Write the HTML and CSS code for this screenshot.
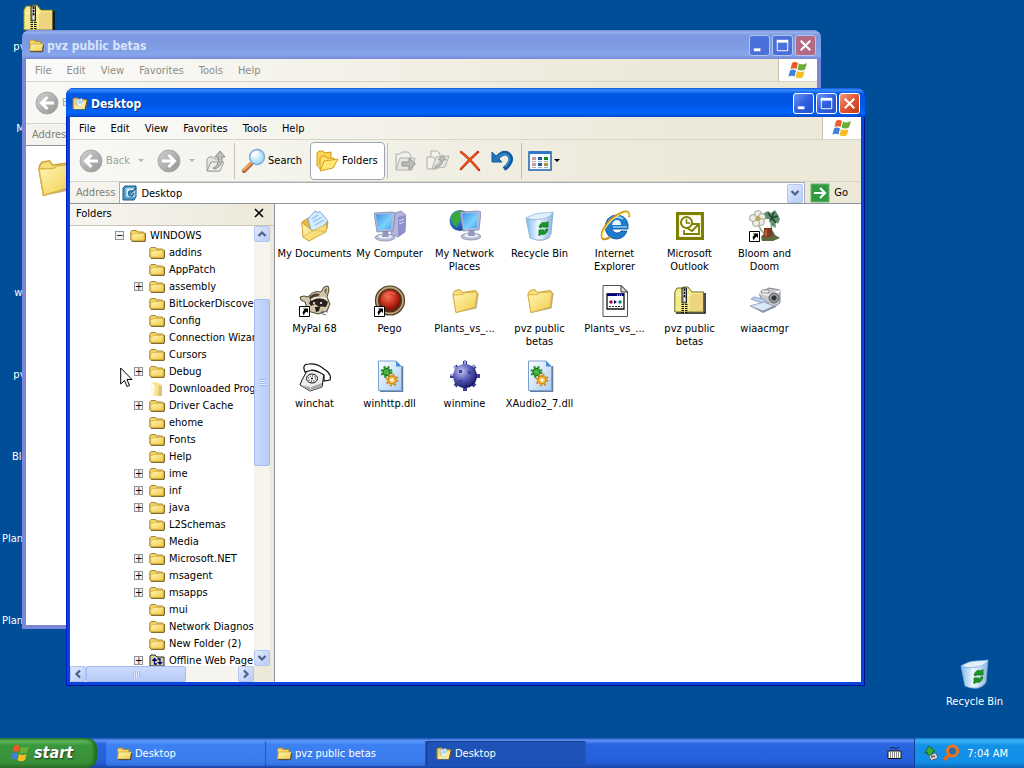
FILE: index.html
```html
<!DOCTYPE html>
<html lang="en">
<head>
<meta charset="utf-8">
<title>Desktop</title>
<link rel="stylesheet" href="styles.css">
</head>
<body>
<svg class="sprites" aria-hidden="true">
  <defs>
    <linearGradient id="gFold" x1="0" y1="0" x2="1" y2="1"><stop offset="0" stop-color="#fff6b8"/><stop offset="1" stop-color="#f3cc48"/></linearGradient>
    <linearGradient id="gGrey" x1="0" y1="0" x2="1" y2="1"><stop offset="0" stop-color="#d2d2d0"/><stop offset="1" stop-color="#929290"/></linearGradient>
    <linearGradient id="gBin" x1="0" y1="0" x2="1" y2="0"><stop offset="0" stop-color="#7fb8ee"/><stop offset=".45" stop-color="#edf7ff"/><stop offset="1" stop-color="#8db4e0"/></linearGradient>
    <linearGradient id="gScreen" x1="0" y1="0" x2="1" y2="1"><stop offset="0" stop-color="#3f8fe8"/><stop offset=".6" stop-color="#7cd2fb"/><stop offset="1" stop-color="#3fa2ee"/></linearGradient>
    <linearGradient id="gPage" x1="0" y1="0" x2="1" y2="1"><stop offset="0" stop-color="#fff"/><stop offset="1" stop-color="#a9cdf5"/></linearGradient>
    <radialGradient id="gMine" cx=".35" cy=".3" r=".7"><stop offset="0" stop-color="#c4c6f2"/><stop offset=".5" stop-color="#5f62bc"/><stop offset="1" stop-color="#1c1d6c"/></radialGradient>
    <radialGradient id="gRed" cx=".4" cy=".35" r=".7"><stop offset="0" stop-color="#f2705a"/><stop offset=".6" stop-color="#c42a17"/><stop offset="1" stop-color="#6e0d06"/></radialGradient>
    <radialGradient id="gGlobe" cx=".35" cy=".3" r=".8"><stop offset="0" stop-color="#5aa9f2"/><stop offset="1" stop-color="#083a8c"/></radialGradient>
    <radialGradient id="gLens" cx=".4" cy=".35" r=".7"><stop offset="0" stop-color="#fff"/><stop offset="1" stop-color="#8ed2f8"/></radialGradient>
  </defs>
  <symbol id="folder" viewBox="0 0 32 32">
    <path d="M8 27 L27 23 29 8" fill="none" stroke="#8d7d45" stroke-width="1.500" opacity=".6"/>
    <path d="M4 10 L4.500 7.500 6 5.500 11 4.500 13 7.500 26 5.500 28 7 26 22 7 27.500Z" fill="#f8dd78" stroke="#c9a23a"/>
    <path d="M4 10 L14 9.500 L16 7.800 L28 7 26 22 7 27.500Z" fill="url(#gFold)" stroke="#dcb548"/>
  </symbol>
  <symbol id="folder16" viewBox="0 0 16 16">
    <path d="M2 13.500 L14.500 13.500 15.500 12 15.500 5" fill="none" stroke="#5f552c" stroke-width="1.200"/>
    <path d="M.8 12 V4 L2 2.500 H6.500 L8 4 H13.500 L15 5.500 V12 L14 13 H2Z" fill="#f2d264" stroke="#a6862c"/>
    <path d="M1.500 6.500 H3.500 L4.500 5.500 H14.300 V12.300 H2Z" fill="url(#gFold)" stroke="#d4ab3c" stroke-width=".7"/>
  </symbol>
  <symbol id="pale16" viewBox="0 0 16 16">
    <path d="M2 2 L7 1 L12 3 L13 15 L2 15Z" fill="#f7e490"/><path d="M2 2 L6 4 L5 15 L2 15Z" fill="#fffbd9"/><path d="M10 4 L13 5 L13 15 L9 15Z" fill="#d8c278"/>
  </symbol>
  <symbol id="open16" viewBox="0 0 16 16">
    <path d="M1.500 13 V3 L2.500 2 H6 L7.500 3.500 H13 V6" fill="#f3d569" stroke="#b18d2e"/>
    <path d="M1.500 13 L3 6 H15.500 L14 13Z" fill="url(#gFold)" stroke="#c9a23a" stroke-width=".7"/><path d="M2 13.700 H14.500 L15.700 7" fill="none" stroke="#4b4224"/>
  </symbol>
  <symbol id="desk16" viewBox="0 0 16 16">
    <path d="M1 13 V3 L2 2 H6 L7 3.500 H12 L15 4 L13.500 13Z" fill="#f3d36e" stroke="#a17a24"/>
    <path d="M4 4 L10 2.500 L12 10 L6 11Z" fill="#e9f6ff" stroke="#88b4d8" stroke-width=".7"/><path d="M2 13 L3 9 L8 11 L11 6 L15 5 L13 13Z" fill="#fbe8a0"/><circle cx="8" cy="6" r="2" fill="#a8d5f4"/>
    <path d="M13 13.500 L15 5" stroke="#5e4415"/>
  </symbol>
  <symbol id="web16" viewBox="0 0 16 16">
    <path d="M1 13 V3 L2 2 H6 L8 4 H15 V13Z" fill="#d7dba0" stroke="#222"/><path d="M2.500 8 L5.500 4.500 L8.500 8Z M8 9 H14 L11 12Z" fill="#000080"/><path d="M5.500 7 V11 H8 M11 10 V6 H8.500" fill="none" stroke="#000080" stroke-width="1.300"/>
  </symbol>
  <symbol id="zip" viewBox="0 0 32 32">
    <path d="M2 28 H31 V8" fill="none" stroke="#111" stroke-width="1.500"/>
    <path d="M.8 27 V7 L3 3 H8 L10 2 H14 L18 7 H29.500 V27Z" fill="#f4ec86" stroke="#6f6a2c"/>
    <path d="M16 9 H29 V26 H16Z" fill="#eed480"/><path d="M2 10 H17" stroke="#fffde0"/>
    <path d="M8 3 H12.500 V18 H8Z" fill="#bbb" stroke="#222"/><path d="M10.500 4 V17" stroke="#111" stroke-width="1.500" stroke-dasharray="2 1"/>
    <path d="M10.500 19 V28" stroke="#111" stroke-width="6" stroke-dasharray="1 1"/><path d="M10.500 18 V28" stroke="#f4ec86" stroke-width="1"/><path d="M9 12 H12 V17 H9Z" fill="#eee" stroke="#333" stroke-width=".6"/>
  </symbol>
  <symbol id="docs" viewBox="0 0 32 32">
    <path d="M3 12 L9 8 L27 13 L29 12 L28 19 L10 31 L4 27Z" fill="#e6b73c" stroke="#b48420" stroke-width=".7"/>
    <path d="M9 9 L16 1 L19 2.500 L21 1.500 L29 11 L20 21 L12 20Z" fill="#d5ecfd" stroke="#78abdc"/><path d="M13 9 L19 5 M14 12 L23 7 M16 15 L25 10" stroke="#8ec0ea" stroke-width="1.300"/>
    <path d="M3 13 L14 21 L28 14 L27 22 L10 31 L4 27Z" fill="url(#gFold)" stroke="#c89b2c" stroke-width=".7"/><path d="M4 27 L15 20 L27 22" fill="none" stroke="#e2ba4a" stroke-width=".8"/>
  </symbol>
  <symbol id="monitor" viewBox="0 0 32 32">
    <ellipse cx="11" cy="27.500" rx="10" ry="3.500" fill="#b9bed6" stroke="#7e86a8" stroke-width=".7"/><ellipse cx="11" cy="26.500" rx="7" ry="2" fill="#edf0f8"/>
    <path d="M9 20 H14 L15 27 H8Z" fill="#929abf"/>
    <path d="M0 3 L18 2 L21 3 L19 21 L3 22Z" fill="#b4bada" stroke="#747da6" stroke-width=".7"/><path d="M2 4.500 L18 3.500 L17 19 L4 20Z" fill="url(#gScreen)"/>
  </symbol>
  <symbol id="computer" viewBox="0 0 32 32">
    <path d="M18 4 L27 1 L32 5 L31 22 L24 27 L17 24Z" fill="#b4b4e0" stroke="#7e7eb4" stroke-width=".7"/><path d="M24 7 L32 5 L31 22 L24 27Z" fill="#8f90cb"/><path d="M25 11 L30 9 M25 14 L30 12" stroke="#dddff8"/>
    <use href="#monitor" width="32" height="32"/>
  </symbol>
  <symbol id="network" viewBox="0 0 32 32">
    <circle cx="11" cy="10.500" r="10.500" fill="url(#gGlobe)"/><path d="M2 6 Q7 0 14 1 L15 4 L10 6 L12 10 L8 14 L9 18 L4 14Z" fill="#37aa35"/>
    <use href="#monitor" x="11" y="-1" width="32" height="32"/>
  </symbol>
  <symbol id="bin" viewBox="0 0 32 32">
    <path d="M10 29 Q18 33 26 28 L28 9 Z" fill="#5575a0" opacity=".4"/>
    <path d="M2 8 Q9 11 17 9 Q26 6 29 2 L27 24 Q25 28 19 30 Q12 31 6 28Z" fill="url(#gBin)" stroke="#7da7d2" stroke-width=".8"/>
    <path d="M2 8 Q10 3 17 3 Q24 3 29 2 Q27 7 18 9 Q9 11 2 8Z" fill="#e3f0fc" stroke="#8ebae4" stroke-width=".8"/>
    <path d="M15 17 Q17 11 22 13 L24 11.500 V17 H18.500 L20 15.500 Q18 15 17 18Z M24 19 Q22 26 17 24 L15 26 V20 H20 L18.500 22 Q21 22 22 19Z" fill="#159a20" stroke="#157a1c" stroke-width=".9"/>
  </symbol>
  <symbol id="ie" viewBox="0 0 32 32">
    <path d="M17 5 Q27 5 29 14 V19 H13 Q14 23 18 23 Q21 23 22 21 H28 Q25 29 17 29 Q7 28 6 17 Q7 6 17 5Z" fill="#1d7bce" stroke="#0d4b94" stroke-width=".8"/>
    <path d="M13 15 Q14 10 18 10 Q22 10 22 15Z" fill="#eaf6ff"/><path d="M10 11 Q17 4 24 9" fill="none" stroke="#8bd3f9" stroke-width="2"/><path d="M14 17 H28" stroke="#d9efff"/>
    <path d="M30 7 Q31 0 24 2 Q12 7 5 18 Q1 26 4 29 Q7 30 11 27" fill="none" stroke="#cf941c" stroke-width="2.200"/><path d="M30 6 Q30 1 24 3 Q12 8 5 20 Q2 26 4 28" fill="none" stroke="#ffdd69" stroke-width="1.300"/>
  </symbol>
  <symbol id="outlook" viewBox="0 0 32 32">
    <path d="M2 2 H30 V30 H2Z" fill="#808000"/><path d="M5.500 5.500 H26.500 V26.500 H5.500Z" fill="#fff" stroke="#f4f4d8"/><circle cx="12.500" cy="12.500" r="5.500" fill="#fff" stroke="#808000" stroke-width="2"/><path d="M12.500 9 V13 H16" fill="none" stroke="#808000" stroke-width="1.500"/>
    <path d="M18 14 H25 V24 H10 V20 M13 18 L18 21 L24 15" fill="none" stroke="#808000" stroke-width="1.800"/>
  </symbol>
  <symbol id="shortcut" viewBox="0 0 32 32"><path d="M.5 21.500 H10.500 V31.500 H.5Z" fill="#fff" stroke="#000"/><path d="M4 23.500 H9 V28 L7.500 26.500 Q5 28 5 30.500 Q2 27 5.500 25Z" fill="#000"/></symbol>
  <symbol id="bloom" viewBox="0 0 32 32">
    <path d="M15 3 L19 1 L22 3 L26 0 L29 5 L31 9 L29 14 L26 11 L27 18 L22 15 L20 9 L16 9Z" fill="#5c8f70"/><path d="M19 3 L27 13 M25 2 L21 12 M29 6 L22 8" stroke="#21442d" stroke-width="1.500"/>
    <path d="M10 16 Q12 22 18 25 M22 11 L23 24" fill="none" stroke="#8aa47c" stroke-width="1.500"/>
    <g fill="#eeede4" stroke="#84827a" stroke-width=".7"><circle cx="9" cy="4" r="3.500"/><circle cx="13" cy="7" r="3.500"/><circle cx="12" cy="12" r="3.500"/><circle cx="7" cy="13" r="3.500"/><circle cx="4" cy="8" r="3.500"/></g><circle cx="9" cy="8.500" r="2.500" fill="#b9a661"/>
    <path d="M12 27 L16 22 L24 21 L26 25 L31 28 L24 31 L13 31Z" fill="#5d6840"/><path d="M15 18 H23 V27 H15Z" fill="#80391f"/><path d="M17 20 V26" stroke="#bb633b" stroke-width="2"/>
    <use href="#shortcut" width="32" height="32"/>
  </symbol>
  <symbol id="raccoon" viewBox="0 0 32 32">
    <path d="M22 7 L25 2 L29 1 L30 5 L28 12 L31 19 L28 26 L19 29 L9 26 L6 17 L2 15 L1 12 L5 11 L9 12 Q14 5 22 7Z" fill="#cfc6aa" stroke="#4e4434"/>
    <path d="M25 5 L28 3 L27 10Z" fill="#75664e"/><path d="M10 12 Q15 7 21 9 L17 14 L12 18Z" fill="#4c3f31"/>
    <path d="M10 18 Q13 12 21 11 L29 17 L27 22 Q23 21 20 22 L16 19 L12 21Z" fill="#2a221a"/><path d="M12 15 Q18 10 28 14" fill="none" stroke="#f0ead8" stroke-width="2"/>
    <circle cx="22" cy="18" r="1" fill="#fff"/><circle cx="15" cy="18" r="1" fill="#fff"/><path d="M16 22 H21 L20 26 L17 27Z" fill="#1c1815"/><path d="M21 28 L27 30 M22 26 L29 27" stroke="#777"/>
    <use href="#shortcut" width="32" height="32"/>
  </symbol>
  <symbol id="pego" viewBox="0 0 32 32"><circle cx="16" cy="15.500" r="14.500" fill="#b6a477" stroke="#4d3b26" stroke-width="1.200"/><circle cx="16" cy="15.500" r="12" fill="#5c2c18"/><circle cx="16" cy="15" r="10" fill="url(#gRed)"/><path d="M10 12 Q14 5 21 9" fill="none" stroke="#e5765f"/><use href="#shortcut" width="32" height="32"/></symbol>
  <symbol id="appdoc" viewBox="0 0 32 32">
    <path d="M4 .5 H22 L28.500 7 V31.500 H4Z" fill="#fff" stroke="#555"/><path d="M22 .5 V7 H28.500Z" fill="#ddd" stroke="#333"/><path d="M8 9 H25 V24 H8Z" fill="#fff" stroke="#111" stroke-width="1.300"/><path d="M8 8.500 H25 V11 H8Z" fill="#000080"/><path d="M18 10 H24" stroke="#fff" stroke-dasharray="1 1"/>
    <circle cx="12" cy="17" r="1.800" fill="#9c1740"/><path d="M15 15 V19 L18 17Z" fill="#000080"/><circle cx="21" cy="17" r="1.800" fill="#128078"/><path d="M10 21.500 H23" stroke="#333" stroke-dasharray="2 1"/>
  </symbol>
  <symbol id="camera" viewBox="0 0 32 32">
    <path d="M10 8 L20 3 L31 5 L31 18 L24 23 L14 18Z" fill="#c9cacd" stroke="#85878e"/><path d="M10 8 L20 10 L31 6" fill="none" stroke="#f2f2f2" stroke-width="2"/><path d="M13 5 H20 V8 H12Z" fill="#eee" stroke="#777" stroke-width=".7"/>
    <circle cx="25" cy="13" r="5" fill="#96989d" stroke="#5d5f65"/><circle cx="25" cy="13" r="2.500" fill="#32353c"/>
    <path d="M5 12 L14 14 L20 18 L16 19 L2 14Z" fill="#bad3f6" stroke="#8190ab" stroke-width=".8"/><path d="M1 21 L15 17 L25 21 L14 26Z" fill="#dce7f8" stroke="#8b98af" stroke-width=".8"/><path d="M1 21 L14 26 L27 20 V22 L14 28Z" fill="#8d95ab"/>
  </symbol>
  <symbol id="phone" viewBox="0 0 32 32">
    <path d="M3 20 L9 9 Q20 12 25 14 L23 27 L11 31 L1 25Z" fill="#eee" stroke="#111"/><path d="M1 25 L11 27 V31Z M11 31 L23 27 V23 L12 27Z" fill="#aaa"/>
    <path d="M5 9 Q4 4 10 4 Q18 3 25 9 Q33 14 31 20 L25 21 V15 Q18 10 13 10 L6 12Z" fill="#fff" stroke="#111" stroke-width="1.200"/>
    <ellipse cx="13" cy="18.500" rx="5.500" ry="4.500" fill="#fff" stroke="#111"/><ellipse cx="13" cy="18.500" rx="3.700" ry="2.700" fill="none" stroke="#111" stroke-width="1.200" stroke-dasharray="1 1.500"/><circle cx="13" cy="18.500" r="1"/>
  </symbol>
  <symbol id="dll" viewBox="0 0 32 32">
    <path d="M6 31.500 H28.500 V6" fill="none" stroke="#647d9b" stroke-width="1.500"/><path d="M4.500 1 H22 L27.500 6.500 V30.500 H4.500Z" fill="url(#gPage)" stroke="#78a1d3"/><path d="M22 1 V6.500 H27.500Z" fill="#438edd"/>
    <circle cx="12.500" cy="12" r="3.500" fill="#4fb247" stroke="#18801c" stroke-width="1.500"/><circle cx="12.500" cy="12" r="5" fill="none" stroke="#209024" stroke-width="2" stroke-dasharray="2 2"/>
    <circle cx="18" cy="20" r="4" fill="#f7c04a" stroke="#d18c16" stroke-width="1.500"/><circle cx="18" cy="20" r="5.500" fill="none" stroke="#d18c16" stroke-width="2" stroke-dasharray="2 2.300"/><circle cx="18" cy="20" r="1.500" fill="#fff"/>
  </symbol>
  <symbol id="mine" viewBox="0 0 32 32">
    <path d="M16 1 V31 M1 16 H31 M6 6 L26 26 M26 6 L6 26" stroke="#3d3f91" stroke-width="4"/><path d="M16 0 V5 M1 15 H5 M5 6 L9 10 M26 5 L23 8" stroke="#9c9ed8" stroke-width="2"/><circle cx="16" cy="16" r="12" fill="url(#gMine)"/>
    <path d="M10 10 H13 V13 H10Z M19 11 H22 V14 H19Z M10 20 H13 V23 H10Z M19 20 H22 V23 H19Z" fill="#3f4198"/>
  </symbol>
  <symbol id="flag" viewBox="0 0 20 20">
    <path d="M4 3 Q7 1 10 3 L8.500 9 Q6 7.500 2.500 9Z" fill="#ec5a25"/><path d="M11 3.500 Q15 5.500 19 3 L17 9.500 Q13 11.500 9.500 9.500Z" fill="#69ae35"/><path d="M2 10.500 Q5 8.500 8 10.500 L6.500 16.500 Q4 15 .5 16.500Z" fill="#3e82dc"/><path d="M9 11 Q13 13 16.500 11 L15 17 Q11 19.500 7.500 17Z" fill="#f7bd25"/>
  </symbol>
  <symbol id="back" viewBox="0 0 24 24"><circle cx="12" cy="12" r="11" fill="url(#gGrey)" stroke="#a8a8a6"/><path d="M19 12 H7 M12.500 6 L6.500 12 L12.500 18" fill="none" stroke="#fff" stroke-width="3"/></symbol>
  <symbol id="forward" viewBox="0 0 24 24"><circle cx="12" cy="12" r="11" fill="url(#gGrey)" stroke="#a8a8a6"/><path d="M5 12 H17 M11.500 6 L17.500 12 L11.500 18" fill="none" stroke="#fff" stroke-width="3"/></symbol>
  <symbol id="up" viewBox="0 0 24 24"><path d="M3 22 V10 L5 8 H9 L11 10 H16 V22Z" fill="#e4e4df" stroke="#a0a09b"/><path d="M3 22 L7 13 H20 L16 22Z" fill="#ecece8" stroke="#a0a09b"/><path d="M9 19 Q15 17 14.500 8 H11 L16 2 L21 8 H18 Q19 17 11 20Z" fill="#c0c0bb" stroke="#8e8e89"/></symbol>
  <symbol id="search" viewBox="0 0 26 26"><path d="M3 23 L10 16" stroke="#a35f31" stroke-width="4" stroke-linecap="round"/><path d="M3 22 L10 15" stroke="#f09a5c" stroke-width="2.500" stroke-linecap="round"/><circle cx="16" cy="9" r="7.500" fill="url(#gLens)" stroke="#7ba6d6" stroke-width="1.300"/><path d="M11 9 Q12 4 17 4" stroke="#fff" stroke-width="2" fill="none"/></symbol>
  <symbol id="folders" viewBox="0 0 24 24"><path d="M2 17 V4 L4 2 H8 L10 4 L16 3 V11" fill="#f8d64f" stroke="#d49919"/><path d="M2 16 L5 20 M5 20 V9 L7 7 H10 L12 9 H19 V18Z" fill="#fce46d" stroke="#d49919"/><path d="M5 22 L9 12 L23 10 L18 19Z" fill="#ffe873" stroke="#d79d1f"/></symbol>
  <symbol id="move" viewBox="0 0 24 24"><path d="M2 20 V5 H6 L8 3 H14 L17 6 V18Z" fill="#efefeb" stroke="#adada8"/><path d="M2 21 L6 9 H21 L18 21Z" fill="#e6e6e1" stroke="#b4b4af"/><path d="M8 13 H15 V9 L21.500 15 L15 21 V17 H8Z" fill="#b9b9b5" stroke="#969692"/></symbol>
  <symbol id="copy" viewBox="0 0 24 24"><path d="M5 2 H11 L14 5 V14 H5Z" fill="#f1f1ed" stroke="#adada8"/><path d="M1 8 H7 L10 11 V20 H1Z" fill="#f1f1ed" stroke="#adada8"/><path d="M6 20 L10 8 L23 7 L19 18Z" fill="#e6e6e1" stroke="#b4b4af"/><path d="M9 17 Q14 16 15 11 L12 11 L17 6 L20 11 H17 Q16 18 9 19Z" fill="#bdbdb8" stroke="#9d9d98" stroke-width=".8"/></symbol>
  <symbol id="delete" viewBox="0 0 24 24"><path d="M3 3 Q11 9 21 21 M20 3 Q11 11 3 20" fill="none" stroke="#b83711" stroke-width="2.500" stroke-linecap="round"/><path d="M3 3 Q11 9 20 20 M19 4 Q11 11 3 19" fill="none" stroke="#f45221" stroke-width="1.500" stroke-linecap="round"/></symbol>
  <symbol id="undo" viewBox="0 0 24 24"><path d="M7 9 Q13 2 18 5 Q23 9 19 15 Q17 18 14 20" fill="none" stroke="#135a9e" stroke-width="4.500"/><path d="M2 3 V13 H12 L9 10 L5 6Z" fill="#2673bd" stroke="#135a9e"/><path d="M7 9 Q13 3 17.500 6 Q21 9 18 14 L15 18" fill="none" stroke="#3488d2" stroke-width="2"/></symbol>
  <symbol id="views" viewBox="0 0 24 24"><path d="M1 3 H23 V21 H1Z" fill="#f4faff" stroke="#1c62ad" stroke-width="1.500"/><path d="M1 2 H23 V5 H1Z" fill="#2f78c5"/><path d="M4 8 H8 V11 H4Z M4 14 H8 V17 H4Z" fill="#c99a9a"/><path d="M10 8 H14 V11 H10Z M10 14 H14 V17 H10Z" fill="#285a9e"/><path d="M16 8 H20 V11 H16Z" fill="#17851b"/><path d="M16 14 H20 V17 H16Z" fill="#b09242"/><path d="M4 12.500 H8 M10 12.500 H14 M16 12.500 H20 M4 18.500 H8 M10 18.500 H14 M16 18.500 H20" stroke="#999" stroke-width=".8"/></symbol>
  <symbol id="deskpad" viewBox="0 0 16 16"><path d="M1 3 L3 1 H14 V12 L12 15 H1Z" fill="#4b9ac6" stroke="#155683"/><path d="M4 3 H13 V12 H4Z" fill="#d9f2fc" stroke="#73b6dc"/><path d="M11 6 H8 Q6 7 7 10 L10 11 L12 8 M8 9 L14 3" fill="none" stroke="#1b6494" stroke-width="1.500"/></symbol>
  <symbol id="go" viewBox="0 0 20 20"><path d="M1 1 H19 V19 H1Z" fill="#2f9a3e" stroke="#75b47b"/><path d="M4 10 H15 M10 5 L15 10 L10 15" fill="none" stroke="#fff" stroke-width="2.200"/></symbol>
  <symbol id="min" viewBox="0 0 20 20"><path d="M4 13 H11 V16 H4Z" fill="#fff"/></symbol>
  <symbol id="max" viewBox="0 0 20 20"><path d="M4.500 5 H15.500 V15.500 H4.500Z" fill="none" stroke="#fff"/><path d="M4 4 H16 V7 H4Z" fill="#fff"/></symbol>
  <symbol id="close" viewBox="0 0 20 20"><path d="M5 5 L15 15 M15 5 L5 15" stroke="#fff" stroke-width="2.200"/></symbol>
  <symbol id="chev" viewBox="0 0 10 10"><path d="M1.500 3 L5 6.500 L8.500 3" fill="none" stroke="#4d6185" stroke-width="2.200"/></symbol>
  <symbol id="keyboard" viewBox="0 0 16 16"><path d="M4 3.500 Q6 1.500 8 3 T13 2" fill="none" stroke="#101c50"/><path d="M2 6 H15 V13.500 H2Z" fill="#fff" stroke="#111"/><path d="M4 8 H14 M4 10 H14 M4 12 H14" stroke="#111" stroke-dasharray="1 1"/></symbol>
  <symbol id="eject" viewBox="0 0 16 16"><path d="M5 9 L13 8 L15 13 L8 15.500Z" fill="#d5dae0" stroke="#53606e"/><path d="M8 12 L12 11" stroke="#556" stroke-width="1.500"/><path d="M6 1 L12 6 L9.500 7 L9 10 L5 10 L4 7 L1.500 8Z" fill="#3cac39" stroke="#176c28"/></symbol>
  <symbol id="lens" viewBox="0 0 18 18"><circle cx="10.500" cy="7" r="5" fill="#286ba9" stroke="#ed761c" stroke-width="3"/><path d="M7 11 L2 16" stroke="#e96a13" stroke-width="3.500"/></symbol>
</svg>

<main class="desktop">
  <section class="shortcuts">
    <button class="item"><svg class="i32"><use href="#zip"/></svg><span>pvz public</span></button>
    <button class="item"><svg class="i32"><use href="#raccoon"/></svg><span>MyPal 68</span></button>
    <button class="item"><svg class="i32"><use href="#pego"/></svg><span>Pego</span></button>
    <button class="item"><svg class="i32"><use href="#camera"/></svg><span>wiaacmgr</span></button>
    <button class="item"><svg class="i32"><use href="#folder"/></svg><span>pvz public</span></button>
    <button class="item"><svg class="i32"><use href="#bloom"/></svg><span>Bloom and</span></button>
    <button class="item"><svg class="i32"><use href="#folder"/></svg><span>Plants_vs_Zo...</span></button>
    <button class="item"><svg class="i32"><use href="#appdoc"/></svg><span>Plants_vs_Zo...</span></button>
  </section>
  <button class="item recycle"><svg class="i32"><use href="#bin"/></svg><span>Recycle Bin</span></button>

  <section class="window window-back">
    <header class="titlebar">
      <svg class="i16"><use href="#open16"/></svg><h2>pvz public betas</h2>
      <button class="ctl" aria-label="Minimize"><svg class="i20"><use href="#min"/></svg></button><button class="ctl" aria-label="Maximize"><svg class="i20"><use href="#max"/></svg></button><button class="ctl ctl-close" aria-label="Close"><svg class="i20"><use href="#close"/></svg></button>
    </header>
    <div class="client">
      <nav class="menubar"><button>File</button><button>Edit</button><button>View</button><button>Favorites</button><button>Tools</button><button>Help</button><span class="brand"><svg class="i20"><use href="#flag"/></svg></span></nav>
      <div class="toolbar"><button class="tool dim"><svg class="i24"><use href="#back"/></svg>Back</button></div>
      <div class="address"><span class="addr-label">Address</span></div>
      <div class="back-body"><svg class="i48"><use href="#folder"/></svg></div>
    </div>
  </section>

  <section class="window window-front">
    <header class="titlebar">
      <svg class="i16"><use href="#desk16"/></svg><h1>Desktop</h1>
      <button class="ctl" aria-label="Minimize"><svg class="i20"><use href="#min"/></svg></button><button class="ctl" aria-label="Maximize"><svg class="i20"><use href="#max"/></svg></button><button class="ctl ctl-close" aria-label="Close"><svg class="i20"><use href="#close"/></svg></button>
    </header>
    <div class="client">
      <nav class="menubar"><button>File</button><button>Edit</button><button>View</button><button>Favorites</button><button>Tools</button><button>Help</button><span class="brand"><svg class="i20"><use href="#flag"/></svg></span></nav>
      <div class="toolbar">
        <button class="tool tool-back dim"><svg class="i24"><use href="#back"/></svg>Back<i class="caret"></i></button>
        <button class="tool tool-forward dim" aria-label="Forward"><svg class="i24"><use href="#forward"/></svg><i class="caret"></i></button>
        <button class="tool" aria-label="Up"><svg class="i24"><use href="#up"/></svg></button>
        <i class="sep"></i>
        <button class="tool tool-search"><svg class="i26"><use href="#search"/></svg>Search</button>
        <button class="tool tool-folders" aria-pressed="true"><svg class="i24"><use href="#folders"/></svg>Folders</button>
        <i class="sep"></i>
        <div class="actions">
          <button class="tool" aria-label="Move To"><svg class="i24"><use href="#move"/></svg></button>
          <button class="tool" aria-label="Copy To"><svg class="i24"><use href="#copy"/></svg></button>
          <button class="tool" aria-label="Delete"><svg class="i24"><use href="#delete"/></svg></button>
          <button class="tool" aria-label="Undo"><svg class="i24"><use href="#undo"/></svg></button>
        </div>
        <i class="sep"></i>
        <button class="tool tool-views" aria-label="Views"><svg class="i24"><use href="#views"/></svg><i class="caret"></i></button>
      </div>
      <div class="address">
        <label class="addr-label" for="addr">Address</label>
        <div class="combo"><svg class="i16"><use href="#deskpad"/></svg><input id="addr" type="text" value="Desktop"><button class="sb" aria-label="Show addresses"><svg class="i10"><use href="#chev"/></svg></button></div>
        <button class="go"><svg class="i20"><use href="#go"/></svg>Go</button>
      </div>
      <div class="body">
        <aside class="pane">
          <div class="pane-head"><span>Folders</span><button aria-label="Close Folders"><svg class="i10"><path d="M1 1 L9 9 M9 1 L1 9" stroke="#000" stroke-width="1.600"/></svg></button></div>
          <div class="pane-grid">
            <ul class="tree">
              <li class="root"><button class="exp" aria-label="Collapse">−</button><svg class="i16"><use href="#folder16"/></svg>WINDOWS</li>
              <li><svg class="i16"><use href="#folder16"/></svg>addins</li>
              <li><svg class="i16"><use href="#folder16"/></svg>AppPatch</li>
              <li><button class="exp" aria-label="Expand">+</button><svg class="i16"><use href="#folder16"/></svg>assembly</li>
              <li><svg class="i16"><use href="#folder16"/></svg>BitLockerDiscover</li>
              <li><svg class="i16"><use href="#folder16"/></svg>Config</li>
              <li><svg class="i16"><use href="#folder16"/></svg>Connection Wizar</li>
              <li><svg class="i16"><use href="#folder16"/></svg>Cursors</li>
              <li><button class="exp" aria-label="Expand">+</button><svg class="i16"><use href="#folder16"/></svg>Debug</li>
              <li><svg class="i16"><use href="#pale16"/></svg>Downloaded Prog</li>
              <li><button class="exp" aria-label="Expand">+</button><svg class="i16"><use href="#folder16"/></svg>Driver Cache</li>
              <li><svg class="i16"><use href="#folder16"/></svg>ehome</li>
              <li><svg class="i16"><use href="#folder16"/></svg>Fonts</li>
              <li><svg class="i16"><use href="#folder16"/></svg>Help</li>
              <li><button class="exp" aria-label="Expand">+</button><svg class="i16"><use href="#folder16"/></svg>ime</li>
              <li><button class="exp" aria-label="Expand">+</button><svg class="i16"><use href="#folder16"/></svg>inf</li>
              <li><button class="exp" aria-label="Expand">+</button><svg class="i16"><use href="#folder16"/></svg>java</li>
              <li><svg class="i16"><use href="#folder16"/></svg>L2Schemas</li>
              <li><svg class="i16"><use href="#folder16"/></svg>Media</li>
              <li><button class="exp" aria-label="Expand">+</button><svg class="i16"><use href="#folder16"/></svg>Microsoft.NET</li>
              <li><button class="exp" aria-label="Expand">+</button><svg class="i16"><use href="#folder16"/></svg>msagent</li>
              <li><button class="exp" aria-label="Expand">+</button><svg class="i16"><use href="#folder16"/></svg>msapps</li>
              <li><svg class="i16"><use href="#folder16"/></svg>mui</li>
              <li><svg class="i16"><use href="#folder16"/></svg>Network Diagnost</li>
              <li><svg class="i16"><use href="#folder16"/></svg>New Folder (2)</li>
              <li><button class="exp" aria-label="Expand">+</button><svg class="i16"><use href="#web16"/></svg>Offline Web Page</li>
            </ul>
            <div class="vbar"><button class="sb" aria-label="Scroll up"><svg class="i10 up"><use href="#chev"/></svg></button><div class="track"><div class="thumb"><i class="grip"></i></div></div><button class="sb" aria-label="Scroll down"><svg class="i10"><use href="#chev"/></svg></button></div>
            <div class="hbar"><button class="sb" aria-label="Scroll left"><svg class="i10 left"><use href="#chev"/></svg></button><div class="track"><div class="thumb"><i class="grip"></i></div></div><button class="sb" aria-label="Scroll right"><svg class="i10 right"><use href="#chev"/></svg></button></div>
          </div>
        </aside>
        <div class="files">
          <button class="item"><svg class="i32"><use href="#docs"/></svg><span>My Documents</span></button>
          <button class="item"><svg class="i32"><use href="#computer"/></svg><span>My Computer</span></button>
          <button class="item"><svg class="i32"><use href="#network"/></svg><span>My Network<br>Places</span></button>
          <button class="item"><svg class="i32"><use href="#bin"/></svg><span>Recycle Bin</span></button>
          <button class="item"><svg class="i32"><use href="#ie"/></svg><span>Internet<br>Explorer</span></button>
          <button class="item"><svg class="i32"><use href="#outlook"/></svg><span>Microsoft<br>Outlook</span></button>
          <button class="item"><svg class="i32"><use href="#bloom"/></svg><span>Bloom and<br>Doom</span></button>
          <button class="item"><svg class="i32"><use href="#raccoon"/></svg><span>MyPal 68</span></button>
          <button class="item"><svg class="i32"><use href="#pego"/></svg><span>Pego</span></button>
          <button class="item"><svg class="i32"><use href="#folder"/></svg><span>Plants_vs_...</span></button>
          <button class="item"><svg class="i32"><use href="#folder"/></svg><span>pvz public<br>betas</span></button>
          <button class="item"><svg class="i32"><use href="#appdoc"/></svg><span>Plants_vs_...</span></button>
          <button class="item"><svg class="i32"><use href="#zip"/></svg><span>pvz public<br>betas</span></button>
          <button class="item"><svg class="i32"><use href="#camera"/></svg><span>wiaacmgr</span></button>
          <button class="item"><svg class="i32"><use href="#phone"/></svg><span>winchat</span></button>
          <button class="item"><svg class="i32"><use href="#dll"/></svg><span>winhttp.dll</span></button>
          <button class="item"><svg class="i32"><use href="#mine"/></svg><span>winmine</span></button>
          <button class="item"><svg class="i32"><use href="#dll"/></svg><span>XAudio2_7.dll</span></button>
        </div>
      </div>
    </div>
  </section>
  <svg class="cursor" viewBox="0 0 13 21"><path d="M.7 1 V17 L4.500 13.500 L7 19.500 L9.500 18.500 L7 12.500 H12Z" fill="#fff" stroke="#000"/></svg>
</main>

<footer class="taskbar">
  <button class="start"><svg class="i20"><use href="#flag"/></svg>start</button>
  <div class="tasks">
    <button class="task"><svg class="i16"><use href="#open16"/></svg>Desktop</button>
    <button class="task"><svg class="i16"><use href="#open16"/></svg>pvz public betas</button>
    <button class="task active"><svg class="i16"><use href="#desk16"/></svg>Desktop</button>
  </div>
  <button class="lang" aria-label="Keyboard"><svg class="i16"><use href="#keyboard"/></svg></button>
  <div class="tray"><svg class="i16"><use href="#eject"/></svg><svg class="i18"><use href="#lens"/></svg><time>7:04 AM</time></div>
</footer>
</body>
</html>
```

FILE: styles.css
```css
* { box-sizing: border-box; }

body {
  margin: 0;
  height: 100vh;
  display: flex;
  flex-direction: column;
  overflow: hidden;
  background: #004e98;
  color: #000;
  font: 11px/13px "DejaVu Sans Condensed", "Noto Sans", sans-serif;
}

button {
  margin: 0;
  padding: 0;
  border: 0;
  background: none;
  color: inherit;
  font: inherit;
}

svg { display: block; flex: none; }
.sprites { position: absolute; width: 0; height: 0; }
.i10 { width: 10px; height: 10px; }
.i16 { width: 16px; height: 16px; }
.i18 { width: 18px; height: 18px; }
.i20 { width: 20px; height: 20px; }
.i24 { width: 24px; height: 24px; }
.i26 { width: 26px; height: 26px; }
.i32 { width: 32px; height: 32px; }
.i48 { width: 48px; height: 48px; }
.up { transform: rotate(180deg); }
.left { transform: rotate(90deg); }
.right { transform: rotate(-90deg); }

.desktop { position: relative; flex: 1; min-height: 0; }

/* Icons with labels */
.item {
  display: flex;
  flex-direction: column;
  align-items: center;
  justify-content: flex-start;
  gap: 5px;
  white-space: nowrap;
  text-align: center;
}
.shortcuts {
  position: absolute;
  left: 1px;
  top: 3px;
  width: 75px;
  display: grid;
  grid-auto-rows: 82px;
  color: #fff;
}
.recycle { position: absolute; right: 12px; bottom: 30px; width: 75px; color: #fff; }

/* Windows */
.window {
  position: absolute;
  display: flex;
  flex-direction: column;
  padding: 0 4px 4px;
  border-radius: 8px 8px 0 0;
}
.window-back { left: 22px; right: 203px; top: 30px; bottom: 109px; background: #7b86d8; }
.window-front {
  left: 66px;
  right: 159px;
  top: 88px;
  bottom: 52px;
  background: #0845dc;
  box-shadow: inset 1px 0 #0019cf, inset -1px -1px #00138c;
}
.titlebar {
  display: flex;
  align-items: center;
  gap: 2px;
  flex: none;
  height: 29px;
  margin: 0 -4px;
  padding: 2px 5px 0 6px;
  border-radius: 8px 8px 0 0;
  color: #fff;
  background: linear-gradient(#0a57d8, #3c8cff 7%, #0058e6 20%, #0054e3 55%, #0067ff 85%, #0046c8);
}
.titlebar h1, .titlebar h2 {
  flex: 1;
  margin: 0 0 0 1px;
  font-size: 12px;
  font-weight: bold;
  line-height: 16px;
  text-shadow: 1px 1px #0a2f8c;
}
.window-back .titlebar { background: linear-gradient(#7a8fdc, #94b0ee 8%, #7c97e0 20%, #7f9ce4 60%, #86a6ec 85%, #7888d6); }
.window-back h2 { color: #d8e4f8; text-shadow: none; }
.ctl {
  width: 21px;
  height: 21px;
  border: 1px solid #fff;
  border-radius: 3px;
  background: linear-gradient(135deg, #7096f0, #2e5fe2 50%, #2351cb);
}
.ctl svg { width: 19px; height: 19px; }
.ctl-close { background: linear-gradient(135deg, #f0987c, #e05533 50%, #c43a14); }
.window-back .ctl { border-color: #b5c3ef; background: #4a70da; }
.window-back .ctl-close { background: #b46a82; }

.client { flex: 1; min-height: 0; display: flex; flex-direction: column; background: #ece9d8; }
.menubar {
  display: flex;
  flex: none;
  height: 23px;
  padding-left: 9px;
  gap: 15px;
  border-bottom: 1px solid #d8d5c6;
  background: linear-gradient(90deg, #fafaf9, #ece9d8 80%);
}
.brand {
  display: grid;
  place-items: center;
  width: 39px;
  margin-left: auto;
  border-left: 1px solid #c6c3b4;
  background: #fff;
}
.toolbar {
  display: flex;
  align-items: center;
  flex: none;
  height: 42px;
  padding-left: 9px;
  border-bottom: 1px solid #d8d5c6;
  background: linear-gradient(90deg, #f8f8f6, #ece9d8 80%);
}
.tool { display: flex; align-items: center; gap: 3px; }
.dim { color: #a09f98; }
.caret { border: 3px solid transparent; border-top-color: #000; border-bottom: 0; }
.dim .caret { border-top-color: #b7b6ae; }
.sep { flex: none; width: 1px; height: 36px; background: #c4c1b2; }
.tool-back .caret { margin-left: 5px; }
.tool-back { margin-right: 13px; }
.tool-forward { gap: 8px; margin-right: 9px; }
.tool-forward + .tool { margin-right: 6px; }
.tool-search { gap: 1px; margin: 0 8px 0 6px; }
.tool-folders {
  height: 38px;
  padding: 0 6px 0 4px;
  margin-right: 2px;
  border: 1px solid #9fa4b4;
  border-radius: 4px;
  background: #fff;
}
.actions { display: flex; gap: 8px; padding: 0 7px 0 6px; }
.tool-views { margin-left: 6px; gap: 2px; }

.address {
  display: flex;
  align-items: center;
  flex: none;
  height: 22px;
  background: linear-gradient(90deg, #f4f3ee, #ece9d8 80%);
  border-bottom: 1px solid #8e919c;
}
.addr-label { padding: 0 4px 0 6px; color: #817f75; }
.combo {
  flex: 1;
  display: flex;
  align-items: center;
  align-self: stretch;
  padding: 0 1px 0 2px;
  border: 1px solid #a5acb2;
  border-bottom: 0;
  background: #fff;
}
.combo input {
  flex: 1;
  min-width: 0;
  padding: 0 0 0 3px;
  border: 0;
  outline: 0;
  background: none;
  color: #000;
  font: inherit;
}
.go { display: flex; align-items: center; gap: 4px; padding: 0 13px 0 5px; }
.back-body { flex: 1; padding: 8px 7px; background: #fff; }
.window-back .client { color: #8e8d87; }

.sb {
  display: grid;
  place-items: center;
  flex: none;
  width: 16px;
  height: 16px;
  border: 1px solid #b3c6f0;
  border-radius: 2px;
  background: linear-gradient(135deg, #e0e9fe, #b9cbf8);
}
.combo .sb { height: 19px; }

/* Folder pane */
.body { flex: 1; min-height: 0; display: flex; }
.pane { flex: none; width: 204px; display: flex; flex-direction: column; padding-right: 4px; }
.pane-head {
  display: flex;
  align-items: center;
  justify-content: space-between;
  flex: none;
  height: 22px;
  margin-right: -4px;
  padding: 0 10px 3px 6px;
  border-bottom: 1px solid #c9c6b7;
  background: linear-gradient(90deg, #f6f5f1, #ece9d8);
}
.pane-grid {
  flex: 1;
  min-height: 0;
  display: grid;
  grid-template: minmax(0, 1fr) 16px / minmax(0, 1fr) 16px;
}
.tree {
  margin: 0;
  padding: 1px 0 0;
  overflow: hidden;
  list-style: none;
  background: #fff;
}
.tree li {
  display: flex;
  align-items: center;
  gap: 4px;
  height: 17px;
  padding-left: 79px;
  white-space: nowrap;
}
.tree li.root { padding-left: 60px; }
.exp {
  flex: none;
  width: 9px;
  height: 9px;
  margin: 0 2px 0 -15px;
  border: 1px solid #8a93a3;
  background: #f4f3ee;
  font-size: 10px;
  line-height: 7px;
}
.vbar, .hbar { display: flex; background: #f5f4ef; }
.vbar { flex-direction: column; }
.track { flex: 1; }
.thumb {
  display: grid;
  place-items: center;
  border: 1px solid #a5bbef;
  border-radius: 2px;
}
.vbar .thumb { height: 41%; margin-top: 57px; background: linear-gradient(90deg, #cbdafe, #b9cbf8); }
.hbar .thumb { width: 100px; height: 16px; background: linear-gradient(#cbdafe, #b9cbf8); }
.grip { width: 7px; height: 7px; background: repeating-linear-gradient(#a4b9ec 0 1px, #e4ecff 1px 2px); }
.hbar .grip { background: repeating-linear-gradient(90deg, #a4b9ec 0 1px, #e4ecff 1px 2px); }

.files {
  flex: 1;
  display: grid;
  grid-template-columns: repeat(auto-fill, 75px);
  grid-auto-rows: 75px;
  align-content: start;
  padding: 6px 0 0 2px;
  border-left: 1px solid #8e919c;
  background: #fff;
}

.cursor { position: absolute; left: 120px; top: 367px; width: 13px; height: 21px; }

/* Taskbar */
.taskbar {
  display: flex;
  flex: none;
  height: 30px;
  color: #fff;
  background: linear-gradient(#1f4fb8, #5a92f2 8%, #2a66e0 20%, #245edb 80%, #1b46a8);
}
.start {
  display: flex;
  align-items: center;
  gap: 4px;
  width: 97px;
  padding-left: 10px;
  border-radius: 0 10px 10px 0;
  background: linear-gradient(#2c7a2c, #5cb35a 10%, #3b973b 25%, #389038 80%, #2a702a);
  box-shadow: inset -3px 0 3px #226b22;
  font-size: 16px;
  font-style: italic;
  font-weight: bold;
  line-height: 20px;
  text-shadow: 1px 1px 2px #1c3a1c;
}
.tasks { flex: 1; min-width: 0; display: flex; padding: 3px 0 2px 9px; }
.task {
  display: flex;
  align-items: center;
  gap: 3px;
  flex: 0 1 160px;
  padding-left: 10px;
  border-right: 1px solid #2458c4;
  border-radius: 2px;
  background: linear-gradient(#5a97fa, #3c81f3 15%, #3a7bec 85%, #2f6ad8);
}
.task.active { background: #1e52b7; box-shadow: inset 1px 1px #153c8c; }
.lang { padding: 0 12px; }
.tray {
  display: flex;
  align-items: center;
  gap: 3px;
  padding: 0 16px 0 8px;
  border-left: 1px solid #0f3f9c;
  background: linear-gradient(#1178c8, #3cb4f6 8%, #1390e8 25%, #1290e8 80%, #0c68b8);
}
.tray time { margin-left: 4px; }
```
